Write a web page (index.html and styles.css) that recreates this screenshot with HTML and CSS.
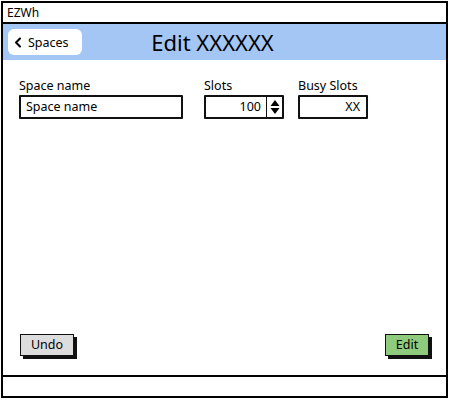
FILE: index.html
```html
<!DOCTYPE html>
<html>
<head>
<meta charset="utf-8">
<link rel="stylesheet" href="styles.css">
</head>
<body>
<div class="window">
  <div class="titlebar">EZWh</div>
  <div class="header">
    <button class="back"><svg class="chev" width="8" height="11" viewBox="0 0 8 11"><path d="M6 1.5 L2 5.5 L6 9.5" fill="none" stroke="#000" stroke-width="2" stroke-linecap="round" stroke-linejoin="round"/></svg>Spaces</button>
    <h1 class="title">Edit XXXXXX</h1>
  </div>
  <div class="content">
    <div class="fields">
      <div class="field f-name">
        <label class="label">Space name</label>
        <div class="input">Space name</div>
      </div>
      <div class="field f-slots">
        <label class="label">Slots</label>
        <div class="input spin">
          <span class="val">100</span>
          <span class="spinner"><svg width="10" height="16" viewBox="0 0 10 16"><path d="M5 1 L9.5 7 L0.5 7 Z M0.5 9 L9.5 9 L5 15 Z" fill="#000"/></svg></span>
        </div>
      </div>
      <div class="field f-busy">
        <label class="label">Busy Slots</label>
        <div class="input right">XX</div>
      </div>
    </div>
    <div class="actions">
      <button class="btn undo">Undo</button>
      <button class="btn edit">Edit</button>
    </div>
  </div>
  <div class="footer"></div>
</div>
</body>
</html>
```
FILE: styles.css
```css
* { box-sizing: border-box; }
body {
  margin: 0;
  background: #fff;
  font-family: "Noto Sans", "Open Sans", sans-serif;
  color: #000;
}
.window {
  margin: 1px 0 0 1px;
  width: 447px;
  height: 397px;
  border: 2px solid #000;
  display: flex;
  flex-direction: column;
}
.titlebar {
  height: 21px;
  border-bottom: 2px solid #000;
  font-size: 12px;
  line-height: 19px;
  padding-left: 4px;
}
.header {
  height: 36px;
  background: #a4c6f5;
  position: relative;
  display: flex;
  align-items: center;
  justify-content: center;
}
.back {
  position: absolute;
  left: 5px;
  top: 5px;
  width: 74px;
  height: 26px;
  border: none;
  border-radius: 6px;
  background: #fff;
  font-family: inherit;
  font-size: 12.5px;
  display: flex;
  align-items: center;
  padding: 0 0 0 6px;
  gap: 6px;
  color: #000;
}
.title {
  margin: 0;
  font-size: 22px;
  font-weight: 400;
  line-height: 36px;
  padding-right: 24px;
}
.content {
  flex: 1;
  display: flex;
  flex-direction: column;
  justify-content: space-between;
  padding: 18px 17px 19px 16px;
}
.fields {
  display: flex;
  align-items: flex-start;
}
.field { display: flex; flex-direction: column; }
.f-name { width: 164px; margin-right: 21px; }
.f-slots { width: 80px; margin-right: 14px; }
.f-busy { width: 70px; }
.label {
  font-size: 12.5px;
  font-weight: 400;
  line-height: 16px;
  height: 17px;
}
.input {
  height: 24px;
  border: 2px solid #111;
  border-radius: 1px;
  font-size: 12.5px;
  line-height: 20px;
  padding: 0 5px;
  display: flex;
  align-items: center;
}
.input.right { justify-content: flex-end; padding-right: 6px; }
.spin { padding: 0; }
.spin .val { flex: 1; text-align: right; padding-right: 5px; }
.spinner {
  width: 16px;
  height: 100%;
  border-left: 1.5px solid #111;
  display: flex;
  align-items: center;
  justify-content: center;
}
.actions {
  display: flex;
  justify-content: space-between;
  padding-left: 1px;
}
.btn {
  height: 22px;
  border: 1.5px solid #111;
  box-shadow: 3px 3px 0 #111;
  font-family: inherit;
  font-size: 12.5px;
  color: #000;
  padding: 0;
  line-height: 18px;
}
.undo { width: 54px; background: #ddd; }
.edit { width: 44px; background: #8fcb7c; }
.footer {
  height: 21px;
  border-top: 2px solid #000;
}
```
